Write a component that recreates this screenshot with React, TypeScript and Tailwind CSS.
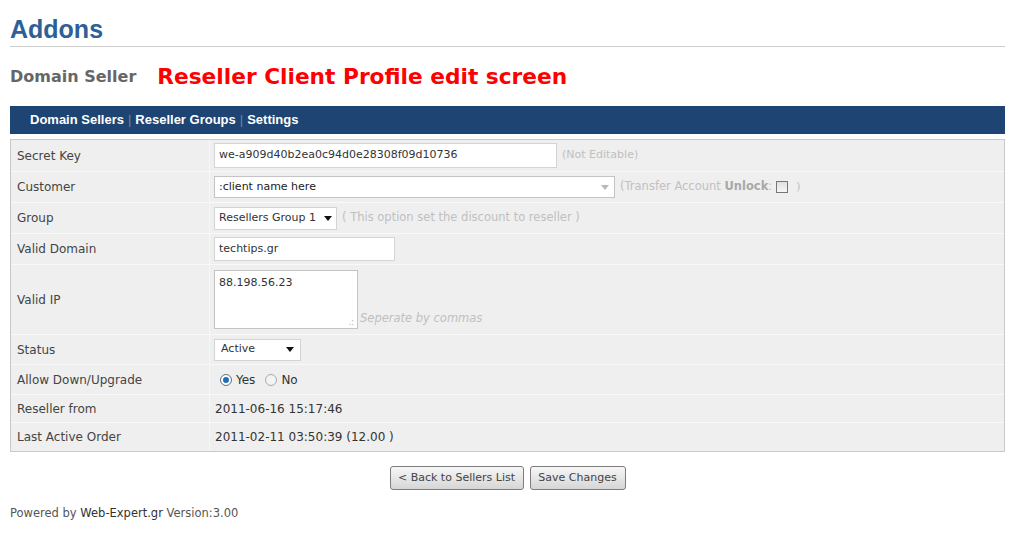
const rows = [
  { label: "Reseller from", value: "2011-06-16 15:17:46", h: "h-[28px]" },
  { label: "Last Active Order", value: "2011-02-11 03:50:39 (12.00 )", h: "h-[28px]" },
];

const Arrow = ({ light }: { light?: boolean }) => (
  <svg width="8" height="5" viewBox="0 0 8 5" className="shrink-0">
    <path d="M0 0 L8 0 L4 5 Z" fill={light ? "#b8b8b8" : "#111"} />
  </svg>
);

const Row = ({
  label,
  h,
  last,
  children,
}: {
  label: string;
  h: string;
  last?: boolean;
  children: React.ReactNode;
}) => (
  <div className={`flex ${h} ${last ? "" : "border-b border-[#f9f9f9]"}`}>
    <div className="flex w-[199px] shrink-0 items-center border-r border-[#f7f7f7] pl-[6px] text-[#444]">
      {label}
    </div>
    <div className="flex flex-1 items-center pl-[4px] text-[#333]">{children}</div>
  </div>
);

const Radio = ({ on }: { on?: boolean }) => (
  <span
    className={`inline-flex h-[12px] w-[12px] items-center justify-center rounded-full border ${
      on ? "border-[#5a6f86] bg-white" : "border-[#a9a9a9] bg-[#f3f3f3]"
    }`}
  >
    {on && <span className="h-[6px] w-[6px] rounded-full bg-[#1f6fb8]" />}
  </span>
);

const App = () => {
  return (
    <div className="min-h-[544px] bg-white font-['DejaVu_Sans',sans-serif] text-[12px]">
      <div className="ml-[10px] w-[995px] pt-[14px]">
        <h1 className="border-b border-[#cccccc] pb-[2px] font-['Liberation_Sans',sans-serif] text-[25px] font-bold leading-[30px] text-[#2e5f96]">
          Addons
        </h1>
        <div className="mt-[14px] flex h-[32px] items-center">
          <span className="text-[16px] font-bold text-[#666]">Domain Seller</span>
          <span className="ml-[21px] text-[21.7px] font-bold text-[#ff0000]">
            Reseller Client Profile edit screen
          </span>
        </div>
        <div className="mt-[13px] flex h-[28px] items-center bg-[#1d4473] pl-[20px] font-['Liberation_Sans',sans-serif] text-[13px] font-bold text-white">
          <span>Domain Sellers</span>
          <span className="mx-[4px] font-normal text-[#6e86a6]">|</span>
          <span>Reseller Groups</span>
          <span className="mx-[4px] font-normal text-[#6e86a6]">|</span>
          <span>Settings</span>
        </div>

        <div className="mt-[5px] border border-[#c9c9c9] bg-[#efefef]">
          <Row label="Secret Key" h="h-[32px]">
            <div className="flex h-[25px] w-[343px] items-center border border-[#d4d4d4] bg-white pl-[4px] text-[11px]">
              we-a909d40b2ea0c94d0e28308f09d10736
            </div>
            <span className="ml-[5px] text-[11px] text-[#c0c0c0]">(Not Editable)</span>
          </Row>
          <Row label="Customer" h="h-[31px]">
            <div className="flex h-[22px] w-[401px] items-center justify-between border border-[#c4c4c4] bg-white pl-[4px] pr-[5px] text-[11px] text-[#222]">
              <span>:client name here</span>
              <Arrow light />
            </div>
            <span className="ml-[5px] text-[11.5px] text-[#c0c0c0]">
              (Transfer Account <b className="text-[#a8a8a8]">Unlock</b>:
            </span>
            <span className="ml-[4px] h-[12px] w-[12px] border border-[#777] bg-gradient-to-b from-[#e0e0e0] to-[#f6f6f6]" />
            <span className="ml-[8px] text-[11px] text-[#c0c0c0]">)</span>
          </Row>
          <Row label="Group" h="h-[31px]">
            <div className="flex h-[23px] w-[123px] items-center justify-between border border-[#d4d4d4] bg-white pl-[4px] pr-[4px] text-[11px]">
              <span>Resellers Group 1</span>
              <Arrow />
            </div>
            <span className="ml-[5px] text-[11.5px] text-[#c0c0c0]">
              ( This option set the discount to reseller )
            </span>
          </Row>
          <Row label="Valid Domain" h="h-[31px]">
            <div className="flex h-[24px] w-[181px] items-center border border-[#d4d4d4] bg-white pl-[4px] text-[11px]">
              techtips.gr
            </div>
          </Row>
          <Row label="Valid IP" h="h-[70px]">
            <div className="flex items-end">
              <div className="relative h-[59px] w-[144px] border border-[#c4c4c4] bg-white pl-[4px] pt-[4px] text-[11px]">
                88.198.56.23
                <span className="absolute bottom-[1px] right-[3px] text-[8px] leading-none text-[#aaa]">.:</span>
              </div>
              <span className="ml-[2px] pb-[2px] text-[11.5px] italic text-[#c0c0c0]">
                Seperate by commas
              </span>
            </div>
          </Row>
          <Row label="Status" h="h-[30px]">
            <div className="flex h-[22px] w-[87px] items-center justify-between border border-[#d4d4d4] bg-white pl-[6px] pr-[6px] text-[11px]">
              <span>Active</span>
              <Arrow />
            </div>
          </Row>
          <Row label="Allow Down/Upgrade" h="h-[30px]">
            <div className="flex items-center pl-[6px]">
              <Radio on />
              <span className="ml-[4px]">Yes</span>
              <span className="ml-[10px]" />
              <Radio />
              <span className="ml-[4px]">No</span>
            </div>
          </Row>
          {rows.map((row, i) => (
            <Row key={row.label} label={row.label} h={row.h} last={i === rows.length - 1}>
              <span className="pl-[1px]">{row.value}</span>
            </Row>
          ))}
        </div>

        <div className="mt-[14px] flex justify-center gap-[6px] text-[11px] text-[#444]">
          <button
            type="button"
            className="h-[24px] w-[134px] rounded-[3px] border border-[#7c7c7c] bg-gradient-to-b from-[#f7f7f7] to-[#d6d6d6]"
          >
            &lt; Back to Sellers List
          </button>
          <button
            type="button"
            className="h-[24px] w-[96px] rounded-[3px] border border-[#7c7c7c] bg-gradient-to-b from-[#f7f7f7] to-[#d6d6d6]"
          >
            Save Changes
          </button>
        </div>

        <div className="mt-[15px] text-[11.5px] text-[#555]">
          Powered by <span className="text-[#333]">Web-Expert.gr</span> Version:3.00
        </div>
      </div>
    </div>
  );
};

export default App;
